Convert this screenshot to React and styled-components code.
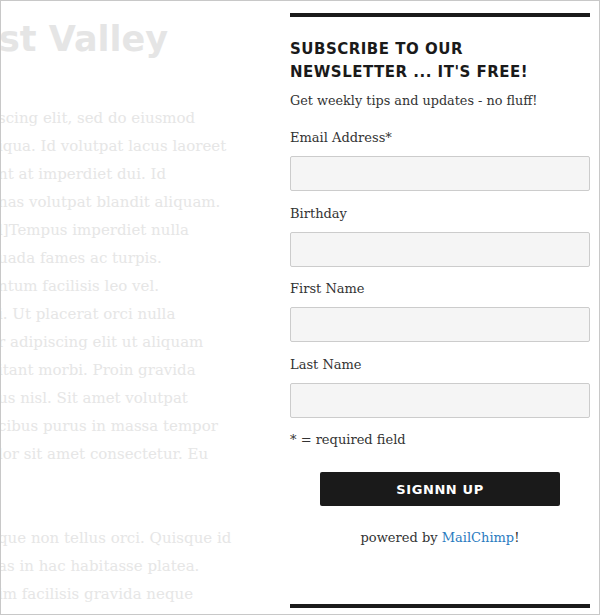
import styled, { createGlobalStyle } from "styled-components";

const GlobalStyle = createGlobalStyle`
  html, body {
    margin: 0;
    padding: 0;
    background: #ffffff;
  }
  * {
    box-sizing: border-box;
  }
`;

const Frame = styled.div`
  display: flex;
  width: 600px;
  height: 615px;
  border: 1px solid #c8c8c8;
  background: #ffffff;
  overflow: hidden;
`;

const Backdrop = styled.div`
  flex: 0 0 289px;
  overflow: hidden;
  padding-top: 14px;
  color: #e6e6e6;
`;

const GhostTitle = styled.h1`
  margin: 0 0 0 -2px;
  font-family: "DejaVu Sans", "Open Sans", sans-serif;
  font-size: 35px;
  font-weight: 700;
  line-height: 48px;
  white-space: nowrap;
  color: #e5e5e5;
`;

const GhostText = styled.p`
  margin: ${(p) => (p.$first ? "41px" : "56px")} 0 0 -3px;
  font-family: "DejaVu Serif", "Liberation Serif", serif;
  font-size: 15px;
  line-height: 28px;
  color: #e6e6e6;
  white-space: nowrap;

  span {
    display: block;
  }
`;

const Sidebar = styled.aside`
  flex: 0 0 300px;
  display: flex;
  flex-direction: column;
  padding-top: 12px;
`;

const Rule = styled.div`
  height: 4px;
  background: #1a1a1a;
`;

const Heading = styled.h2`
  margin: 21px 0 0;
  font-family: "DejaVu Sans", "Open Sans", sans-serif;
  font-size: 15px;
  font-weight: 700;
  line-height: 23px;
  letter-spacing: 0.5px;
  text-transform: uppercase;
  color: #1a1a1a;
`;

const Intro = styled.p`
  margin: 6px 0 0;
  font-family: "DejaVu Serif", "Liberation Serif", serif;
  font-size: 12.8px;
  line-height: 22px;
  color: #333333;
`;

const Form = styled.form`
  display: flex;
  flex-direction: column;
  margin-top: 15px;
`;

const Field = styled.div`
  display: flex;
  flex-direction: column;
  gap: 7px;
  margin-bottom: 11.5px;
`;

const Label = styled.label`
  font-family: "DejaVu Serif", "Liberation Serif", serif;
  font-size: 13px;
  line-height: 22px;
  color: #333333;
`;

const Input = styled.input`
  height: 35px;
  width: 100%;
  border: 1px solid #cccccc;
  border-radius: 2px;
  background: #f5f5f5;
  padding: 0 8px;
  font-size: 13px;
  outline: none;
`;

const Note = styled.p`
  margin: 0;
  font-family: "DejaVu Serif", "Liberation Serif", serif;
  font-size: 13px;
  line-height: 22px;
  color: #333333;
`;

const Submit = styled.button`
  align-self: center;
  width: 240px;
  height: 34px;
  margin-top: 21px;
  border: none;
  border-radius: 2px;
  background: #1a1a1a;
  color: #ffffff;
  font-family: "DejaVu Sans", "Open Sans", sans-serif;
  font-size: 13px;
  font-weight: 700;
  letter-spacing: 0.6px;
  cursor: pointer;
`;

const Powered = styled.p`
  margin: 21px 0 0;
  text-align: center;
  font-family: "DejaVu Serif", "Liberation Serif", serif;
  font-size: 13px;
  line-height: 22px;
  color: #333333;

  a {
    color: #2a7bbf;
    text-decoration: none;
  }
`;

const BottomRule = styled(Rule)`
  margin-top: auto;
  margin-bottom: 6px;
`;

const ghostFirst = [
  "scing elit, sed do eiusmod",
  "iqua. Id volutpat lacus laoreet",
  "nt at imperdiet dui. Id",
  "nas volutpat blandit aliquam.",
  "l]Tempus imperdiet nulla",
  "uada fames ac turpis.",
  "ntum facilisis leo vel.",
  "i. Ut placerat orci nulla",
  "r adipiscing elit ut aliquam",
  "itant morbi. Proin gravida",
  "us nisl. Sit amet volutpat",
  "cibus purus in massa tempor",
  "lor sit amet consectetur. Eu",
];

const ghostSecond = [
  "que non tellus orci. Quisque id",
  "as in hac habitasse platea.",
  "im facilisis gravida neque",
];

const fields = ["Email Address*", "Birthday", "First Name", "Last Name"];

export default function App() {
  return (
    <>
      <GlobalStyle />
      <Frame>
        <Backdrop>
          <GhostTitle>st Valley</GhostTitle>
          <GhostText $first>
            {ghostFirst.map((line) => (
              <span key={line}>{line}</span>
            ))}
          </GhostText>
          <GhostText>
            {ghostSecond.map((line) => (
              <span key={line}>{line}</span>
            ))}
          </GhostText>
        </Backdrop>

        <Sidebar>
          <Rule />
          <Heading>
            Subscribe to our
            <br />
            newsletter ... it's free!
          </Heading>
          <Intro>Get weekly tips and updates - no fluff!</Intro>
          <Form onSubmit={(e) => e.preventDefault()}>
            {fields.map((name) => (
              <Field key={name}>
                <Label>{name}</Label>
                <Input type="text" />
              </Field>
            ))}
            <Note>* = required field</Note>
            <Submit type="submit">SIGNNN UP</Submit>
          </Form>
          <Powered>
            powered by <a href="#">MailChimp</a>!
          </Powered>
          <BottomRule />
        </Sidebar>
      </Frame>
    </>
  );
}
